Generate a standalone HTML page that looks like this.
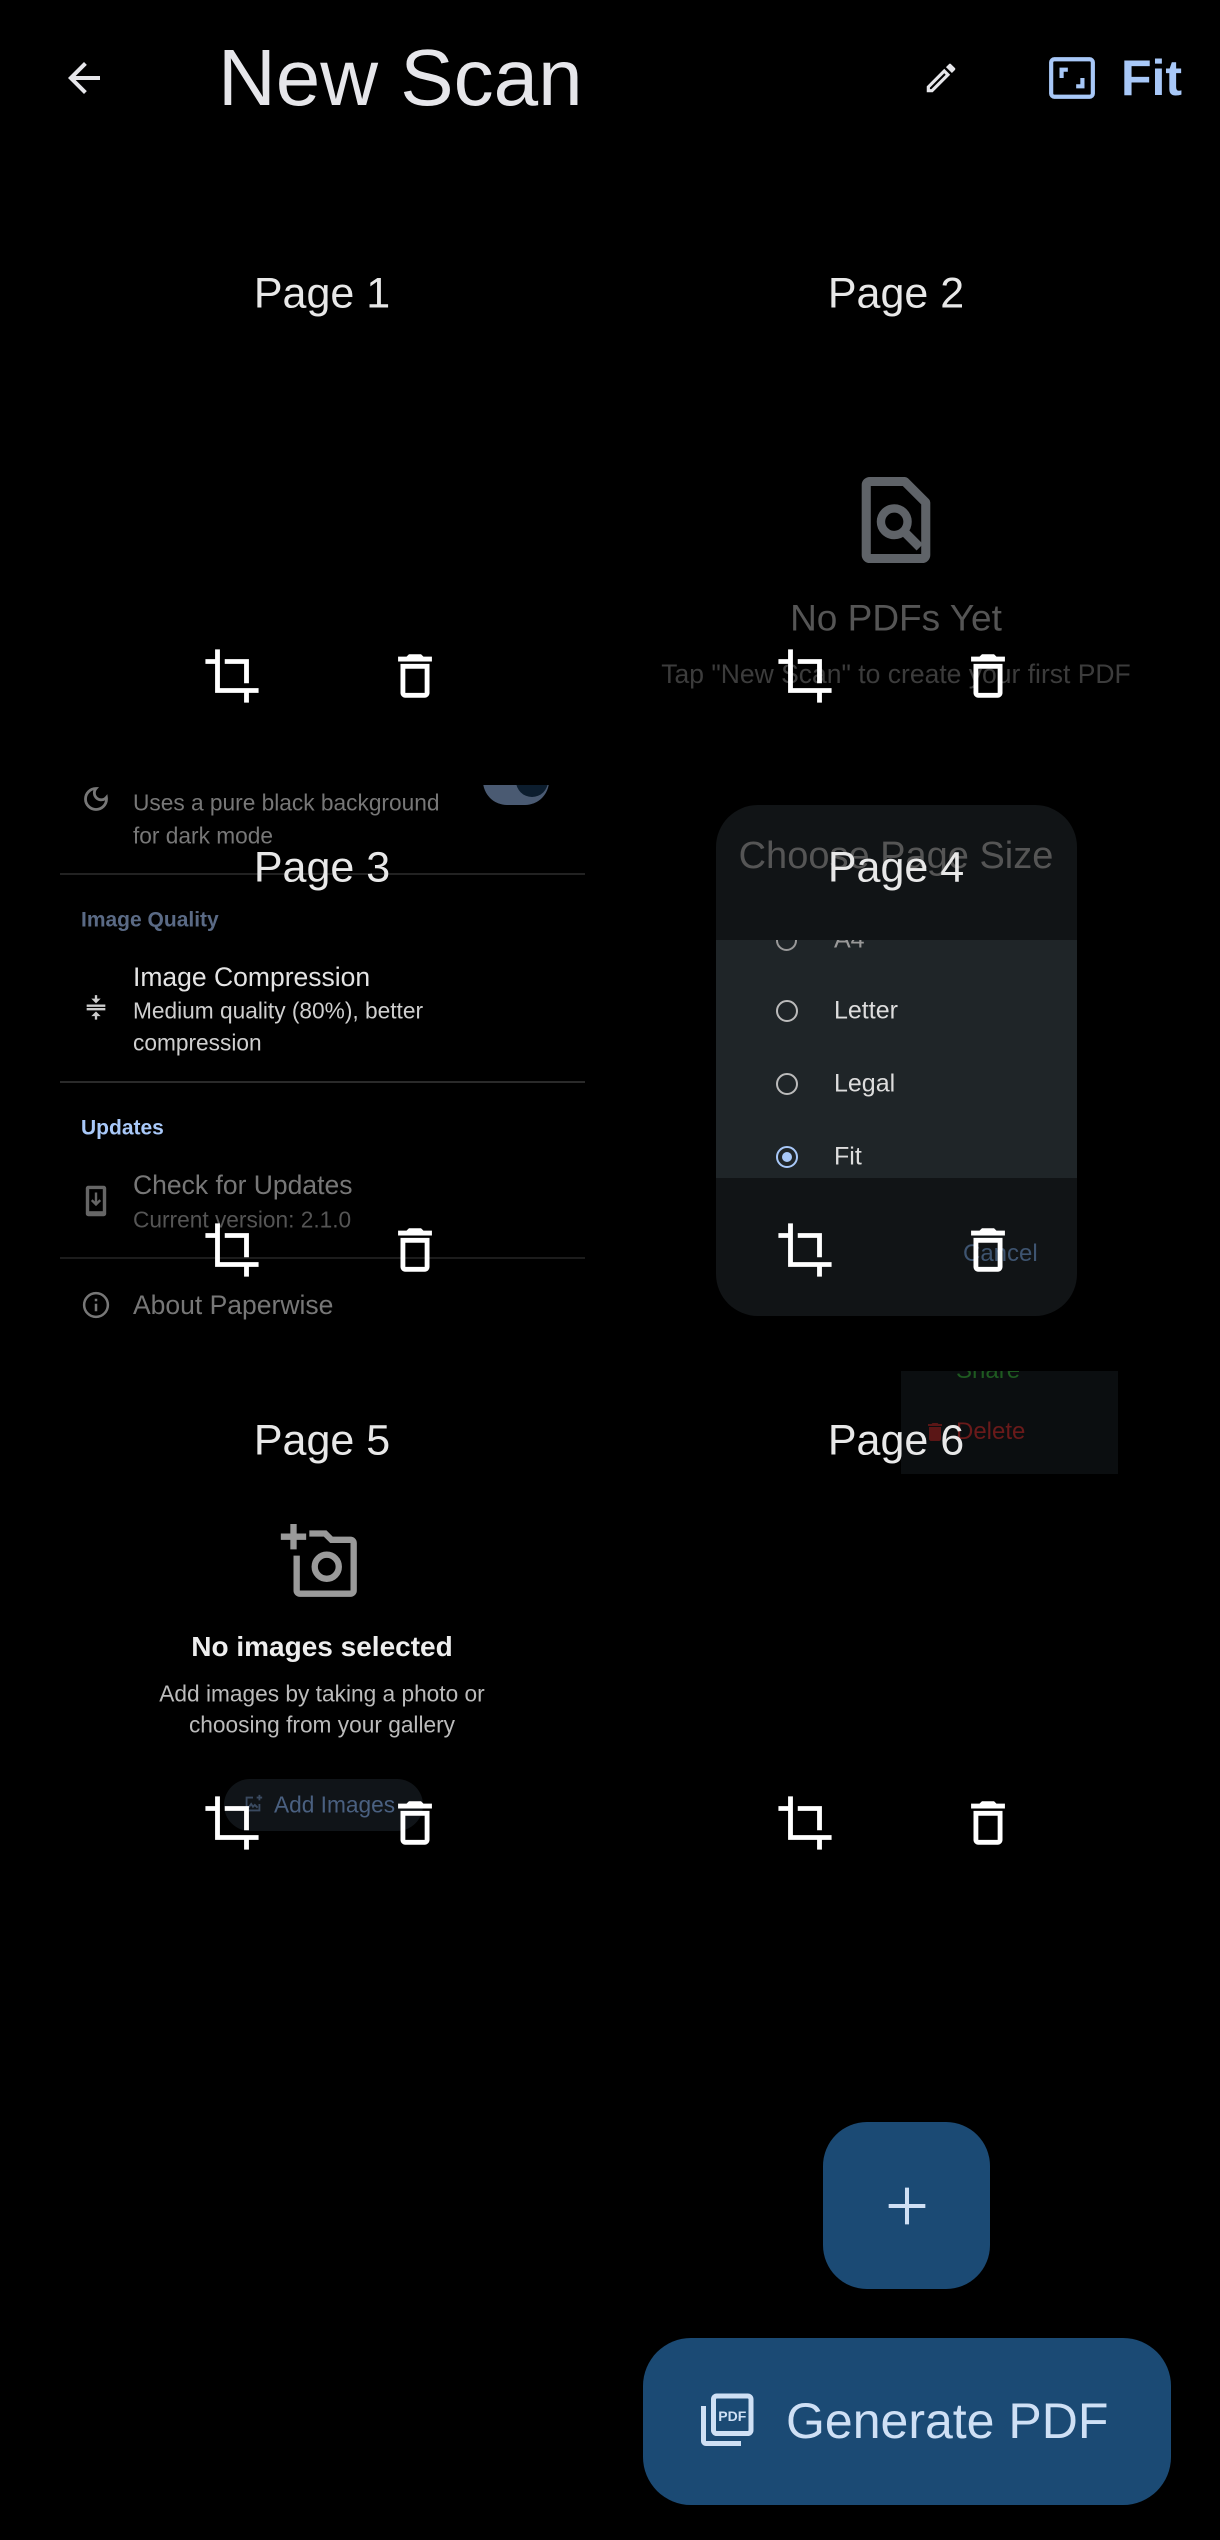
<!DOCTYPE html>
<html><head><meta charset="utf-8"><style>
*{margin:0;padding:0;box-sizing:border-box}
html,body{width:1220px;height:2540px;background:#000;overflow:hidden;font-family:"Liberation Sans",sans-serif}
.a{position:absolute;white-space:nowrap;line-height:1}
.c{transform:translate(-50%,-50%)}
.l{transform:translateY(-50%)}
.pg{font-size:43px;color:#e8e8e8}
svg{position:absolute;overflow:visible}
</style></head><body>

<!-- top bar -->
<svg style="left:60px;top:54px" width="48" height="48" viewBox="0 0 24 24"><path d="M20 11H7.83l5.59-5.59L12 4l-8 8 8 8 1.41-1.41L7.83 13H20v-2z" fill="#e6e6ea"/></svg>
<div class="a l" style="left:218px;top:78px;font-size:80px;color:#e6e6ea">New Scan</div>
<svg style="left:922px;top:59px" width="38" height="38" viewBox="0 0 24 24"><path d="M3 17.25V21h3.75L17.81 9.94l-3.75-3.75L3 17.25zM5.92 19H5v-.92l9.06-9.06.92.92L5.92 19zM20.71 5.63l-2.34-2.34a1 1 0 00-1.41 0l-1.83 1.83 3.75 3.75 1.83-1.83a1 1 0 000-1.41z" fill="#e6e6ea"/></svg>
<svg style="left:1046px;top:53px" width="52" height="50" viewBox="0 0 24 24"><rect x="2" y="3" width="20" height="18" rx="1.5" fill="none" stroke="#a8c8f8" stroke-width="2"/><path d="M6 12V7h4v2H8v3H6zm12 0v5h-4v-2h2v-3h2z" fill="#a8c8f8"/></svg>
<div class="a l" style="left:1121px;top:78px;font-size:50px;color:#a8c8f8;font-weight:bold">Fit</div>

<!-- page 2 background content -->
<svg style="left:861px;top:476px" width="70" height="88" viewBox="0 0 20 25"><path d="M2.5 1.5h10l6 6v15a1 1 0 01-1 1h-15a1 1 0 01-1-1v-20a1 1 0 011-1z" fill="none" stroke="#5f6368" stroke-width="2.6" stroke-linejoin="round"/><circle cx="9.5" cy="13" r="3.8" fill="none" stroke="#5f6368" stroke-width="2.4"/><path d="M12.3 15.8l4.5 4.5" stroke="#5f6368" stroke-width="2.6"/></svg>
<div class="a c" style="left:896px;top:618px;font-size:37px;color:#555">No PDFs Yet</div>
<div class="a c" style="left:896px;top:674px;font-size:26.5px;color:#3c3c3c">Tap "New Scan" to create your first PDF</div>

<!-- settings fragment -->
<div style="position:absolute;left:0;top:785px;width:610px;height:520px;overflow:hidden">
 <svg style="left:82px;top:0px" width="28" height="28" viewBox="0 0 24 24"><path d="M12 3a9 9 0 109 9c0-.46-.04-.92-.1-1.36A5.39 5.39 0 0112 3z" fill="none" stroke="#777" stroke-width="2.4"/></svg>
 <div style="position:absolute;left:483px;top:-28px;width:66px;height:48px;border-radius:24px;background:#4a5a72"></div>
 <div style="position:absolute;left:516px;top:-20px;width:32px;height:32px;border-radius:50%;background:#0c1d2e"></div>
</div>
<div class="a l" style="left:133px;top:803px;font-size:22.7px;color:#777">Uses a pure black background</div>
<div class="a l" style="left:133px;top:836px;font-size:22.7px;color:#777">for dark mode</div>
<div style="position:absolute;left:60px;top:873px;width:525px;height:2px;background:#222"></div>
<div class="a l" style="left:81px;top:920px;font-size:21px;color:#5a6a85;font-weight:bold">Image Quality</div>
<svg style="left:82px;top:993px" width="28" height="30" viewBox="0 0 24 24"><path d="M8 19h3v3h2v-3h3l-4-4-4 4zm8-15h-3V1h-2v3H8l4 4 4-4zM4 9v2h16V9H4zm0 3h16v2H4z" fill="#ccc"/></svg>
<div class="a l" style="left:133px;top:977px;font-size:26.5px;color:#e4e4e4">Image Compression</div>
<div class="a l" style="left:133px;top:1011px;font-size:22.7px;color:#cfcfcf">Medium quality (80%), better</div>
<div class="a l" style="left:133px;top:1043px;font-size:22.7px;color:#cfcfcf">compression</div>
<div style="position:absolute;left:60px;top:1081px;width:525px;height:2px;background:#2a2a2a"></div>
<div class="a l" style="left:81px;top:1128px;font-size:21px;color:#a8c8f8;font-weight:bold">Updates</div>
<svg style="left:82px;top:1184px" width="28" height="34" viewBox="0 0 14 20"><rect x="1" y="1" width="12" height="18" rx="1.5" fill="#666"/><rect x="3" y="3" width="8" height="13" fill="#000"/><path d="M7 5v7M4.5 9.5L7 12l2.5-2.5" stroke="#666" stroke-width="1.4" fill="none"/></svg>
<div class="a l" style="left:133px;top:1185px;font-size:26.5px;color:#777">Check for Updates</div>
<div class="a l" style="left:133px;top:1220px;font-size:22.7px;color:#555">Current version: 2.1.0</div>
<div style="position:absolute;left:60px;top:1257px;width:525px;height:2px;background:#1c1c1c"></div>
<svg style="left:81px;top:1290px" width="30" height="30" viewBox="0 0 24 24"><circle cx="12" cy="12" r="9.5" fill="none" stroke="#777" stroke-width="2"/><path d="M12 11v6M12 7v2" stroke="#777" stroke-width="2"/></svg>
<div class="a l" style="left:133px;top:1305px;font-size:26.5px;color:#777">About Paperwise</div>

<!-- dialog -->
<div style="position:absolute;left:716px;top:805px;width:361px;height:511px;border-radius:42px;background:#111416;overflow:hidden">
 <div style="position:absolute;left:0;top:135px;width:361px;height:238px;background:#1f2528"></div>
</div>
<div class="a c" style="left:896px;top:856px;font-size:38px;color:#555">Choose Page Size</div>
<div style="position:absolute;left:716px;top:940px;width:361px;height:238px;overflow:hidden">
 <div style="position:absolute;left:60px;top:-10px;width:21px;height:21px;border:2px solid #999;border-radius:50%"></div>
 <div class="a l" style="left:118px;top:0px;font-size:25px;color:#999">A4</div>
</div>
<div style="position:absolute;left:776px;top:1000px;width:22px;height:22px;border:2.5px solid #bbb;border-radius:50%"></div>
<div class="a l" style="left:834px;top:1011px;font-size:25px;color:#ddd">Letter</div>
<div style="position:absolute;left:776px;top:1073px;width:22px;height:22px;border:2.5px solid #bbb;border-radius:50%"></div>
<div class="a l" style="left:834px;top:1084px;font-size:25px;color:#ddd">Legal</div>
<div style="position:absolute;left:776px;top:1146px;width:22px;height:22px;border:2.5px solid #a8c8f8;border-radius:50%"></div>
<div style="position:absolute;left:782px;top:1152px;width:10px;height:10px;background:#a8c8f8;border-radius:50%"></div>
<div class="a l" style="left:834px;top:1157px;font-size:25px;color:#ddd">Fit</div>
<div class="a l" style="left:963px;top:1254px;font-size:24px;color:#3e5470">Cancel</div>

<!-- popup menu -->
<div style="position:absolute;left:901px;top:1371px;width:217px;height:103px;background:#0b0e10;overflow:hidden">
 <div class="a l" style="left:55px;top:0px;font-size:24px;color:#1e5a20">Share</div>
 <div class="a l" style="left:55px;top:61px;font-size:24px;color:#6a1a1a">Delete</div>
 <svg style="left:22px;top:48px" width="24" height="26" viewBox="0 0 24 24"><path d="M6 19c0 1.1.9 2 2 2h8c1.1 0 2-.9 2-2V7H6v12zM19 4h-3.5l-1-1h-5l-1 1H5v2h14V4z" fill="#5a1616"/></svg>
</div>

<!-- page 5 empty state -->
<svg style="left:280px;top:1524px" width="84" height="76" viewBox="0 0 26 24"><path d="M3 0v3H0v2h3v3h2V5h3V3H5V0H3z" fill="#9a9a9a"/><path d="M9 3h5l2 2h6a1 1 0 011 1v15a1 1 0 01-1 1H6a1 1 0 01-1-1V10" fill="none" stroke="#9a9a9a" stroke-width="2"/><circle cx="14.5" cy="13.5" r="3.8" fill="none" stroke="#9a9a9a" stroke-width="2"/></svg>
<div class="a c" style="left:322px;top:1647px;font-size:28px;color:#eee;font-weight:bold">No images selected</div>
<div class="a c" style="left:322px;top:1694px;font-size:22.7px;color:#bbb">Add images by taking a photo or</div>
<div class="a c" style="left:322px;top:1725px;font-size:22.7px;color:#bbb">choosing from your gallery</div>
<div style="position:absolute;left:224px;top:1779px;width:199px;height:52px;border-radius:26px;background:#101418"></div>
<svg style="left:242px;top:1793px" width="22" height="22" viewBox="0 0 24 24"><path d="M19 12v7H5V5h7M19 2v6M16 5h6M7 16l3-4 2 3 2-2 3 3" fill="none" stroke="#3a4a60" stroke-width="2"/></svg>
<div class="a l" style="left:274px;top:1805px;font-size:22.7px;color:#4a6080">Add Images</div>

<!-- page labels and icons -->
<div class="a c pg" style="left:322px;top:294px">Page 1</div>
<div class="a c pg" style="left:896px;top:294px">Page 2</div>
<div class="a c pg" style="left:322px;top:868px">Page 3</div>
<div class="a c pg" style="left:896px;top:868px">Page 4</div>
<div class="a c pg" style="left:322px;top:1441px">Page 5</div>
<div class="a c pg" style="left:896px;top:1441px">Page 6</div>

<svg width="0" height="0"><defs>
<symbol id="crop" viewBox="0 0 24 24"><path d="M17 15h2V5H9v2h8v8zM7 17V1H5v4H1v2h4v12h12v4h2v-4h4v-2H7z" fill="#fff"/></symbol>
<symbol id="del" viewBox="0 0 24 24"><path d="M6 19c0 1.1.9 2 2 2h8c1.1 0 2-.9 2-2V7H6v12zM8 9h8v10H8V9zm7.5-5l-1-1h-5l-1 1H5v2h14V4z" fill="#fff"/></symbol>
</defs></svg>
<svg style="left:203px;top:647px" width="58" height="58"><use href="#crop"/></svg>
<svg style="left:386px;top:647px" width="58" height="58"><use href="#del"/></svg>
<svg style="left:776px;top:647px" width="58" height="58"><use href="#crop"/></svg>
<svg style="left:959px;top:647px" width="58" height="58"><use href="#del"/></svg>
<svg style="left:203px;top:1221px" width="58" height="58"><use href="#crop"/></svg>
<svg style="left:386px;top:1221px" width="58" height="58"><use href="#del"/></svg>
<svg style="left:776px;top:1221px" width="58" height="58"><use href="#crop"/></svg>
<svg style="left:959px;top:1221px" width="58" height="58"><use href="#del"/></svg>
<svg style="left:203px;top:1794px" width="58" height="58"><use href="#crop"/></svg>
<svg style="left:386px;top:1794px" width="58" height="58"><use href="#del"/></svg>
<svg style="left:776px;top:1794px" width="58" height="58"><use href="#crop"/></svg>
<svg style="left:959px;top:1794px" width="58" height="58"><use href="#del"/></svg>

<!-- FAB -->
<div style="position:absolute;left:823px;top:2122px;width:167px;height:167px;border-radius:44px;background:#1b4a74"></div>
<svg style="left:885px;top:2184px" width="44" height="44" viewBox="0 0 24 24"><path d="M12 2v20M2 12h20" stroke="#cfe0f5" stroke-width="2.2"/></svg>
<div style="position:absolute;left:643px;top:2338px;width:528px;height:167px;border-radius:48px;background:#1b4a74"></div>
<svg style="left:696px;top:2391px" width="60" height="60" viewBox="0 0 24 24"><path d="M4 6H2v14c0 1.1.9 2 2 2h14v-2H4V6z" fill="#cfe0f5"/><rect x="7" y="2" width="15" height="15" rx="1.3" fill="none" stroke="#cfe0f5" stroke-width="2"/><text x="14.5" y="12" font-size="5.6" font-family="Liberation Sans" font-weight="bold" fill="#cfe0f5" text-anchor="middle">PDF</text></svg>
<div class="a l" style="left:786px;top:2421px;font-size:50px;color:#cfe0f5">Generate PDF</div>

</body></html>
